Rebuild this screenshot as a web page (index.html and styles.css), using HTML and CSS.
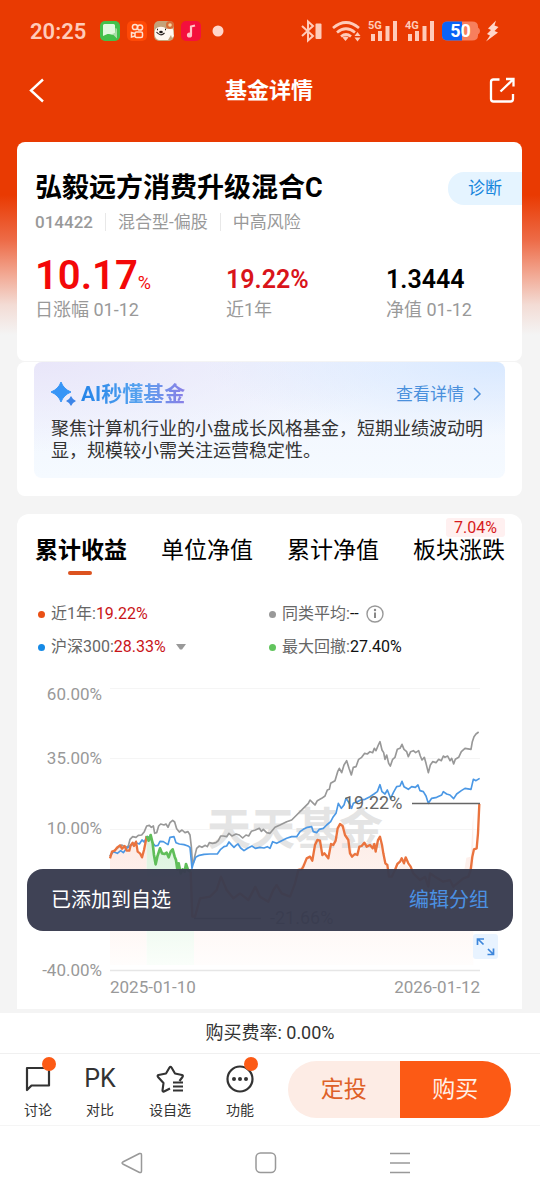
FILE: index.html
```html
<!DOCTYPE html>
<html lang="zh-CN">
<head>
<meta charset="utf-8">
<meta name="viewport" content="width=device-width, initial-scale=1">
<title>基金详情</title>
<link rel="stylesheet" href="styles.css">
</head>
<body>
<div class="app">
  <div class="status">
    <span class="clock">20:25</span>
    <svg class="apps" width="126" height="22" viewBox="0 0 126 22" aria-hidden="true">
      <rect x="0" y="1" width="20" height="20" rx="5" fill="#43c04b"/>
      <path d="M4.500 4h9a1.500 1.500 0 0 1 1.500 1.500v7a1.500 1.500 0 0 1-1.500 1.500h-6L3 16V5.500A1.500 1.500 0 0 1 4.500 4z" fill="#e2f8df"/>
      <path d="M15.500 8a1.500 1.500 0 0 1 1.500 1.500v9L13.500 15H9l3-1 3-1z" fill="#a9dfa8"/>
      <rect x="27" y="1" width="20" height="20" rx="5" fill="#ff4906"/>
      <g fill="none" stroke="#ffe0d0" stroke-width="1.500"><circle cx="35" cy="7" r="2.600"/><circle cx="40" cy="7.500" r="2.600"/><rect x="35" y="12" width="7.500" height="5.500" rx="1.500"/><path d="M35 13.500l-3.500-1v4.500l3.500-1"/></g>
      <rect x="54" y="1" width="20" height="20" rx="5" fill="#c4a379"/>
      <path d="M55 10c2-4 9-4 11-1l6-1c2 2 1 5 2 8l-2 2-1-3-3 5h-9c-4-1-5-5-4-10z" fill="#fff8f0"/>
      <circle cx="70" cy="5" r="4" fill="#d76c37"/><circle cx="70" cy="5" r="1.800" fill="#f6d6a0"/>
      <path d="M56.500 12q4 5 8 1" fill="none" stroke="#2c2420" stroke-width="1.200"/><ellipse cx="61" cy="12" rx="1.800" ry="1.200" fill="#1f1a18"/><path d="M57 9.500h1M65 9.500h1" stroke="#1f1a18" stroke-width="1.500"/>
      <rect x="81" y="1" width="20" height="20" rx="5" fill="#f4103d"/>
      <path d="M95 5.500l-4 1v8" fill="none" stroke="#ffc3c6" stroke-width="2.200"/><circle cx="89.500" cy="15" r="2.600" fill="#ffc3c6"/>
      <circle cx="118" cy="11" r="5.500" fill="#ffd6ca"/>
    </svg>
    <svg class="signals" width="200" height="24" viewBox="300 19 200 24" role="img" aria-label="电量 50">
      <g fill="none" stroke="#ffcbb9" stroke-width="2"><path d="M302 26l11 10-5 4.500v-19l5 4.500-11 10"/></g>
      <rect x="315.500" y="23.500" width="6" height="15.500" rx="1" fill="#ffcbb9"/>
      <g fill="none" stroke="#ffcbb9" stroke-width="2.700"><path d="M333 28q13-11 26 0M337 32.500q9-7.500 18 0M341 36.500q5-4 10 0"/></g>
      <path d="M342.500 37.500q3-2 6 0l-3 3.500zM354.500 36l3-4 3 4zM354.500 37.500l3 4 3-4z" fill="#ffcbb9"/>
      <g fill="#ffcbb9">
        <path d="M371 34h4v7h-4zM378 31h4v10h-4zM385.500 26h4v15h-4zM393 21h4v20h-4zM408 34h4v7h-4zM415 31h4v10h-4zM422.500 26h4v15h-4zM430 21h4v20h-4z"/>
        <text class="net" x="368" y="29">5G</text><text class="net" x="405" y="29">4G</text>
      </g>
      <path d="M448 21.500h24q6 0 6 5v1q2 1 2 3.500t-2 3.500v1q0 5-6 5h-24q-6 0-6-5v-9q0-5 6-5z" fill="#f77f5d"/>
      <path d="M462 21.500v19h-14q-6 0-6-5v-9q0-5 6-5z" fill="#0b63f6"/>
      <text class="battery" x="460.500" y="37">50</text>
      <path d="M496 20.500l-8 8 3 1.500-4 4 3 1.500-4 6 12-9-3.500-1.500 4-4-4-1.500z" fill="#ffd6ca"/>
    </svg>
  </div>

  <header class="titlebar">
    <button class="icon-btn" aria-label="返回"><svg width="20" height="28" viewBox="0 0 20 28"><path d="M14 3.500L2 14.500l12 11" fill="none" stroke="#fff" stroke-width="2.400"/></svg></button>
    <h1>基金详情</h1>
    <button class="icon-btn" aria-label="分享"><svg width="26" height="26" viewBox="0 0 26 26" fill="none" stroke="#fff" stroke-width="2.300"><path d="M10.500 2.500H4.500a2.500 2.500 0 0 0-2.500 2.500v17a2.500 2.500 0 0 0 2.500 2.500h17a2.500 2.500 0 0 0 2.500-2.500v-5M11.500 14.500L24 2.500M17 2h7.500v7.500"/></svg></button>
  </header>

  <main>
    <section class="card fund">
      <div class="fund-top">
        <h2>弘毅远方消费升级混合C</h2>
        <a class="diagnose" href="#diagnose">诊断</a>
      </div>
      <div class="meta"><span class="code">014422</span><span>混合型-偏股</span><span>中高风险</span></div>
      <div class="stats">
        <div><div class="figure big rise">10.17<small>%</small></div><div class="cap">日涨幅 01-12</div></div>
        <div><div class="figure rise">19.22%</div><div class="cap">近1年</div></div>
        <div><div class="figure">1.3444</div><div class="cap">净值 01-12</div></div>
      </div>
    </section>

    <section class="card ai">
      <div class="ai-box">
        <div class="ai-head">
          <svg width="26" height="26" viewBox="0 0 26 26" aria-hidden="true"><path d="M10 1Q12.500 8 20 11 12.500 14 10 21 7.500 14 0 11 7.500 8 10 1z" fill="#3795f6" stroke="#3795f6"/><path d="M20 15q1.500 3.500 5 5-3.500 1.500-5 5-1.500-3.500-5-5 3.500-1.500 5-5z" fill="#3d85e8"/></svg>
          <h3>AI秒懂基金</h3>
          <a href="#details">查看详情<svg width="10" height="16" viewBox="0 0 10 16" aria-hidden="true"><path d="M2 2l6 6-6 6" fill="none" stroke="#4a90dc" stroke-width="1.500"/></svg></a>
        </div>
        <p>聚焦计算机行业的小盘成长风格基金，短期业绩波动明显，规模较小需关注运营稳定性。</p>
      </div>
    </section>

    <section class="card performance">
      <nav class="tabs">
        <button class="active">累计收益</button>
        <button>单位净值</button>
        <button>累计净值</button>
        <button>板块涨跌<span class="tag">7.04%</span></button>
      </nav>
      <div class="legend">
        <div class="item orange">近1年:<b class="rise">19.22%</b></div>
        <div class="item gray">同类平均:<b>--</b><svg class="info" width="18" height="18" viewBox="0 0 18 18" aria-hidden="true"><circle cx="9" cy="9" r="8" fill="none" stroke="#999" stroke-width="1.400"/><path d="M9 7.500V13" stroke="#888" stroke-width="2"/><circle cx="9" cy="5" r="1.200" fill="#888"/></svg></div>
        <div class="item blue">沪深300:<b class="rise">28.33%</b><svg class="drop" width="10" height="6" viewBox="0 0 10 6" aria-hidden="true"><path d="M0 0h10L6 5.500H4z" fill="#999"/></svg></div>
        <div class="item green">最大回撤:<b>27.40%</b></div>
      </div>
      <div class="chart">
        <svg viewBox="17 672 505 337" role="img" aria-label="累计收益走势">
          <defs>
            <linearGradient id="warm" x1="0" y1="0" x2="0" y2="1"><stop offset="0" stop-color="#fdeae4"/><stop offset="1" stop-color="#fffdfc"/></linearGradient>
            <linearGradient id="cool" x1="0" y1="0" x2="0" y2="1"><stop offset="0" stop-color="#d9f2dc"/><stop offset="1" stop-color="#fafefa"/></linearGradient>
          </defs>
          <path d="M110 688.500H480M110 758.500H480M110 829.500H480M110 899.500H480" stroke="#f5f5f5"/>
          <path d="M110 970.500H480" stroke="#e6e6e6" stroke-width="1.500"/>
          <g class="axis">
            <text x="102" y="700" text-anchor="end">60.00%</text><text x="102" y="764" text-anchor="end">35.00%</text><text x="102" y="834" text-anchor="end">10.00%</text><text x="102" y="976" text-anchor="end">-40.00%</text>
            <text x="110" y="993">2025-01-10</text><text x="480" y="993" text-anchor="end">2026-01-12</text>
          </g>
          <g transform="translate(30 720) scale(.33333)" fill="none" stroke-linejoin="round">
            <path fill="url(#warm)" d="M240 735V415l6-20 16-13 8-6 6 10 8-8 6 14h8l4-16 6-8 10-3 5 30 13 17 6-22 8-42V735z"/>
            <path fill="url(#cool)" d="M350 735V348l6 14 6-17 6 25 9 63 13-48 6 15 14-2 6 14 12-24 10 32 4 28 4-18 6 30 16-28 6 18h18V735z"/>
            <path fill="url(#warm)" d="M492 735V590l18-55 30-5 33-60 17 40 40 10 46-20 44 40 20-45 40 35 25-80 25-35 10-5 7 12 8-47 15-13 7 43 18 10 8-43 14-10 13-50 15 6 17 42 5 40 22-8 22-24 17 12 17 15 7-35 6 25 10 55 11 40 38-55 12 10 50 40 35 0 50 20 35-20 10-62 13-3 8-133V735z"/>
          </g>
          <text class="mark" x="207" y="845">天天基金</text>
          <g transform="translate(30 720) scale(.33333)" fill="none" stroke-linejoin="round">
            <polyline stroke="#989898" stroke-width="5" points="240,408 248,396 258,388 268,380 275,375 288,382 295,378 300,358 308,350 318,352 325,346 335,345 343,335 350,318 358,316 364,322 370,318 374,340 380,338 386,318 392,312 402,315 408,312 414,322 420,308 428,301 434,306 440,326 448,336 456,330 465,338 474,335 480,345 484,380 487,425 490,430 494,410 500,385 508,378 516,382 526,376 532,380 538,368 548,370 558,368 565,362 572,348 580,348 590,350 597,340 606,348 618,342 628,345 638,354 648,345 656,348 664,334 676,330 688,325 694,334 700,328 710,338 720,340 735,322 750,315 770,305 785,300 800,285 820,265 835,250 840,240 850,250 855,255 862,242 875,235 885,228 892,210 898,208 902,190 915,182 923,155 928,145 935,158 942,135 950,122 957,145 964,165 970,142 978,140 986,118 995,112 1004,100 1012,102 1020,95 1028,98 1033,85 1038,92 1045,75 1050,65 1056,90 1061,98 1065,118 1070,105 1076,130 1081,138 1088,118 1095,112 1102,88 1110,85 1116,73 1122,88 1130,95 1135,110 1142,95 1150,92 1157,98 1166,92 1171,108 1176,120 1183,112 1188,130 1195,158 1201,135 1208,125 1218,128 1226,118 1234,122 1240,108 1245,112 1253,108 1260,122 1265,115 1271,132 1276,118 1286,112 1294,95 1305,85 1323,88 1327,65 1332,50 1338,42 1346,36"/>
            <polyline stroke="#4b98e5" stroke-width="5" points="240,408 250,395 262,400 272,392 280,398 290,385 300,378 310,372 318,368 328,372 336,360 343,366 350,350 360,352 368,368 376,378 384,376 390,364 400,365 414,374 420,352 432,350 438,368 448,372 462,374 474,378 480,382 486,445 490,430 497,412 508,406 522,403 540,402 562,402 572,388 582,380 590,378 597,366 604,374 612,382 618,376 624,372 632,384 642,392 654,384 666,378 676,385 690,382 702,384 712,380 720,385 728,365 740,370 755,362 770,355 785,350 800,350 810,335 820,328 832,322 845,320 850,335 860,338 868,328 880,325 890,315 902,305 910,290 918,280 925,250 934,265 942,255 948,235 955,245 965,265 970,250 982,245 992,240 1005,238 1020,230 1032,222 1042,215 1050,194 1056,215 1065,222 1072,210 1082,235 1090,218 1100,200 1110,198 1116,184 1122,200 1135,208 1145,200 1156,202 1164,195 1170,212 1180,215 1188,228 1195,250 1205,235 1220,232 1235,225 1240,215 1250,222 1260,225 1271,236 1280,222 1294,212 1305,205 1323,208 1330,178 1338,182 1349,175"/>
            <polyline stroke="#ea733e" stroke-width="7" points="240,415 246,395 254,392 262,382 270,376 276,386 284,378 290,392 298,392 302,376 308,368 312,378 318,365 323,395 330,400 336,412 342,390 348,360 350,348"/>
            <polyline stroke="#ea733e" stroke-width="7" points="482,455 487,590 495,590 510,535 540,530 560,510 573,470 590,510 610,535 630,520 655,540 676,500 690,530 715,545 730,510 740,495 755,520 780,530 795,490 805,450 815,448 820,440 830,415 840,410 847,422 855,375 862,360 870,362 877,405 883,400 895,415 903,372 910,375 917,362 923,325 930,312 938,318 945,345 955,360 960,400 966,410 975,402 982,405 988,380 995,378 1003,368 1010,380 1020,375 1028,385 1033,372 1037,395 1044,360 1050,350 1056,375 1060,400 1066,430 1072,435 1077,470 1085,470 1095,450 1102,432 1110,425 1115,415 1122,430 1127,412 1135,430 1142,440 1150,460 1170,480 1185,470 1195,500 1200,460 1215,470 1240,485 1260,480 1270,500 1300,475 1315,470 1322,450 1327,410 1332,388 1340,385 1344,340 1348,252"/>
            <polyline stroke="#5fbe59" stroke-width="8" points="350,348 356,362 362,345 368,370 372,405 377,433 382,410 390,385 396,400 404,402 410,398 416,412 422,395 428,388 434,410 438,420 442,448 446,430 452,460 458,448 464,455 468,432 474,450 482,455"/>
          </g>
          <path d="M412 803.500H480M194 918.500H261" stroke="#666" stroke-width="1.700"/>
          <text class="value" x="344" y="809">19.22%</text><text class="value" x="270" y="924">-21.66%</text>
        </svg>
        <button class="expand" aria-label="全屏"><svg width="25" height="25" viewBox="0 0 25 25" fill="none" stroke="#3d86db" stroke-width="1.700"><path d="M4.500 11V5H11M5 5l5.500 5.500M20.500 14.500V20.500H14.500M20.500 20.500l-5.500-5.500"/></svg></button>
      </div>
    </section>
  </main>

  <footer>
    <div class="rate">购买费率: 0.00%</div>
    <div class="actions">
      <button class="tool"><span class="glyph"><svg width="30" height="30" viewBox="0 0 30 30" fill="none" stroke="#333" stroke-width="2.200" stroke-linejoin="round"><path d="M4 4h22v17.500H8.500L4 26z"/></svg><i class="dot"></i></span>讨论</button>
      <button class="tool"><span class="glyph pk">PK</span>对比</button>
      <button class="tool"><span class="glyph"><svg width="30" height="30" viewBox="0 0 30 30" fill="none" stroke="#333" stroke-width="2.100" stroke-linejoin="round"><path d="M15 24.500l-6 3q-1.500.5-1.500-1l1-7.500-5.500-6q-1-1.500.5-2l7.500-1.500 3.500-6q1-1.500 2 0l3.500 6 7 1.500q1.500.5.5 2l-3 4"/><path d="M18 18.500h10M18 22.500h10M18 26.500h10"/></svg></span>设自选</button>
      <button class="tool"><span class="glyph"><svg width="30" height="30" viewBox="0 0 30 30"><circle cx="15" cy="15" r="12.500" fill="none" stroke="#333" stroke-width="2.200"/><circle cx="9" cy="15" r="2" fill="#333"/><circle cx="15" cy="15" r="2" fill="#333"/><circle cx="21" cy="15" r="2" fill="#333"/></svg><i class="dot"></i></span>功能</button>
      <div class="trade"><button class="plan">定投</button><button class="buy">购买</button></div>
    </div>
    <nav class="system">
      <button aria-label="返回"><svg width="24" height="24" viewBox="0 0 24 24"><path d="M19.500 2.500L2.800 11q-1.500 1 0 2l16.700 8.500q2 .5 2-1.500V4q0-2-2-1.500z" fill="none" stroke="#999" stroke-width="1.500"/></svg></button>
      <button aria-label="主页"><svg width="24" height="24" viewBox="0 0 24 24"><rect x="2" y="2" width="19.500" height="19.500" rx="4.500" fill="none" stroke="#999" stroke-width="1.500"/></svg></button>
      <button aria-label="最近任务"><svg width="24" height="24" viewBox="0 0 24 24"><path d="M2 2.500h20M2 12h20M2 21.500h20" stroke="#999" stroke-width="1.500"/></svg></button>
    </nav>
  </footer>

  <div class="toast" role="status"><span>已添加到自选</span><a href="#groups">编辑分组</a></div>
</div>
</body>
</html>
```
FILE: styles.css
```css
* { box-sizing: border-box; }
body {
  margin: 0;
  background: #f4f4f4;
  color: #000;
  font-family: Roboto, "Noto Sans CJK SC", sans-serif;
}
h1, h2, h3, p { margin: 0; }
button {
  margin: 0;
  padding: 0;
  border: 0;
  background: none;
  color: inherit;
  font: inherit;
}
a { text-decoration: none; }
svg { display: block; flex: none; }

.app {
  position: relative;
  display: flex;
  flex-direction: column;
  min-height: 100vh;
  background: linear-gradient(#e93a02 195px, #ed6b47 240px, #f2a994 275px, #f3dcd5 305px, #f4f4f4 335px);
}

.status {
  display: flex;
  align-items: center;
  height: 62px;
  padding: 0 40px 0 30px;
}
.clock { color: #ffcbb9; font-size: 22px; font-weight: 600; }
.apps { margin-left: auto; }
.signals { margin-left: 74px; }
.net { font-size: 11px; font-weight: 700; }
.battery { fill: #fff; font-size: 18px; font-weight: 700; text-anchor: middle; }

.titlebar {
  display: flex;
  align-items: center;
  justify-content: space-between;
  height: 56px;
  padding: 0 25px 0 29px;
  color: #fff;
}
.titlebar h1 { padding-top: 2px; font-size: 22px; font-weight: 700; line-height: 32px; }

main {
  display: flex;
  flex-direction: column;
  flex: 1;
  padding: 24px 18px 4px 17px;
}
.card { border-radius: 8px; background: #fff; }
.rise { color: #d9141a; }

.fund { padding: 26px 0 39px 18px; }
.fund-top { display: flex; align-items: center; justify-content: space-between; }
.fund-top h2 { font-size: 27px; font-weight: 700; line-height: 40px; }
.diagnose {
  padding: 0 20px;
  border-radius: 16px 0 0 16px;
  background: #e5f4ff;
  color: #1685dc;
  font-size: 17px;
  line-height: 33px;
}
.meta { display: flex; color: #999; font-size: 17px; line-height: 18px; margin-top: 5px; }
.meta span + span { margin-left: 12px; padding-left: 12px; border-left: 1px solid #e8e8e8; }
.meta .code { font-weight: 500; }
.stats { display: grid; grid-template-columns: 191fr 160fr 136fr; margin-top: 21px; }
.figure {
  height: 46px;
  font-size: 25px;
  font-weight: 600;
  line-height: 55px;
}
.figure.big { font-size: 40px; line-height: 48px; color: #f30808; }
.figure small { font-size: 18px; font-weight: 400; }
.cap { color: #999; font-size: 18px; line-height: 24px; }

.ai { margin-top: 1px; padding: 0 17px 18px; }
.ai-box {
  padding: 17px 8px 16px 17px;
  border-radius: 8px;
  background:
    radial-gradient(ellipse at 100% 0, #d9e9ff, transparent 45%),
    radial-gradient(ellipse at 0 0, #e9e6f9, transparent 55%),
    linear-gradient(#f0f4fe, #f5faff);
}
.ai-head { display: flex; align-items: center; height: 30px; }
.ai-head h3 {
  margin-left: 4px;
  background: linear-gradient(90deg, #2484e8, #55a2ef 55%, #8a7fe6);
  background-clip: text;
  color: transparent;
  font-size: 21px;
  font-weight: 700;
  line-height: 30px;
}
.ai-head a {
  display: flex;
  align-items: center;
  gap: 8px;
  margin: 0 15px 0 auto;
  color: #4a90dc;
  font-size: 17px;
  line-height: 24px;
}
.ai p { margin-top: 9px; color: #333; font-size: 18px; line-height: 22px; }

.performance { margin-top: 18px; border-radius: 12px 12px 0 0; }
.tabs { display: flex; justify-content: space-between; padding: 21px 17px 0 18px; }
.tabs button { position: relative; height: 42px; padding-bottom: 10px; font-size: 23px; line-height: 32px; }
.tabs .active { font-weight: 700; }
.tabs .active::after {
  content: "";
  position: absolute;
  bottom: 2px;
  left: 33px;
  width: 24px;
  height: 4px;
  border-radius: 2px;
  background: #dc5320;
}
.tag {
  position: absolute;
  top: -17px;
  right: 0;
  padding: 0 8px;
  border-radius: 3px;
  background: #fff0f0;
  color: #d71b20;
  font-size: 16px;
  line-height: 19px;
}
.legend {
  display: grid;
  grid-template-columns: 231fr 236fr;
  gap: 9px 0;
  padding: 25px 17px 0 21px;
  color: #666;
  font-size: 16px;
  line-height: 24px;
}
.item { display: flex; align-items: center; }
.item b { color: #111; font-weight: 400; }
.item b.rise { color: #c91418; }
.item::before { content: ""; width: 7px; height: 7px; margin-right: 6px; border-radius: 50%; background: #999; }
.orange::before { background: #ea5015; }
.blue::before { background: #168ae6; }
.green::before { background: #61c45d; }
.info { margin-left: 7px; }
.drop { margin-left: 10px; }

.chart { position: relative; margin-top: 13px; }
.chart > svg { width: 100%; height: auto; }
.axis { fill: #999; font-size: 17px; }
.value { fill: #666; font-size: 18px; }
.mark { fill: #ddd; fill-opacity: .8; font-size: 44px; font-weight: 700; }
.expand { position: absolute; right: 24px; bottom: 50px; border-radius: 3px; background: #e8f3ff; }

footer { background: #fff; color: #333; }
.rate { border-bottom: 1px solid #f0f0f0; font-size: 18px; line-height: 40px; text-align: center; }
.actions { display: flex; align-items: center; height: 72px; padding: 0 29px 0 11px; border-bottom: 1px solid #f5f5f5; }
.tool {
  display: flex;
  flex: 70 0 0;
  flex-direction: column;
  align-items: center;
  gap: 6px;
  padding-top: 4px;
  font-size: 14px;
  line-height: 20px;
}
.tool:first-child { flex-grow: 54; }
.glyph { position: relative; height: 30px; }
.pk { font-size: 25px; line-height: 30px; }
.dot { position: absolute; top: -7px; right: -3px; width: 14px; height: 14px; border-radius: 50%; background: #fc5a15; }
.trade { display: grid; grid-template-columns: 1fr 1fr; width: 223px; margin-left: 13px; border-radius: 29px; overflow: hidden; font-size: 23px; line-height: 57px; }
.plan { background: #fdece5; color: #de6028; }
.buy { background: #fc5a15; color: #fff0e6; }
.system { display: flex; justify-content: center; gap: 110px; padding: 25px 8px 25px 0; }

.toast {
  position: absolute;
  right: 27px;
  bottom: 269px;
  left: 27px;
  display: flex;
  justify-content: space-between;
  padding: 1px 24px 0;
  border-radius: 16px;
  background: rgba(57, 60, 80, .97);
  color: #fff;
  font-size: 20px;
  line-height: 61px;
}
.toast a { color: #4b91e3; }
```
